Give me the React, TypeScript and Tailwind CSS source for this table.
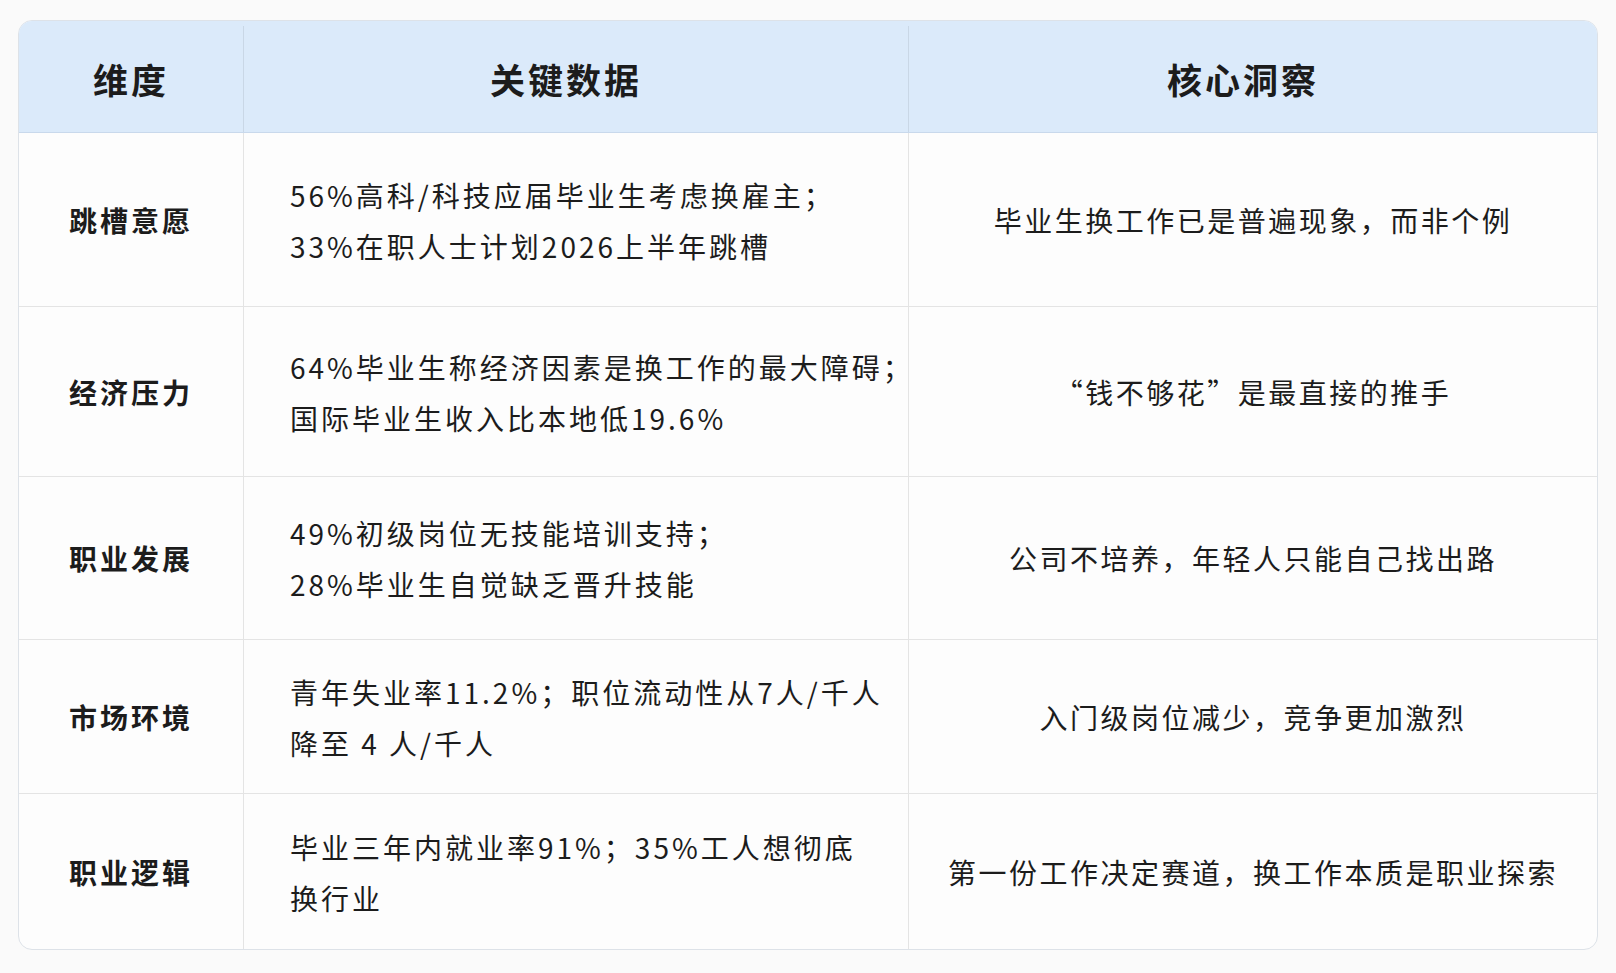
type Row = {
  dim: string;
  data: string[];
  insight: string;
  h: string;
};

const rows: Row[] = [
  {
    dim: "跳槽意愿",
    data: ["56%高科/科技应届毕业生考虑换雇主；", "33%在职人士计划2026上半年跳槽"],
    insight: "毕业生换工作已是普遍现象，而非个例",
    h: "h-[174px]",
  },
  {
    dim: "经济压力",
    data: ["64%毕业生称经济因素是换工作的最大障碍；", "国际毕业生收入比本地低19.6%"],
    insight: "“钱不够花”是最直接的推手",
    h: "h-[170px]",
  },
  {
    dim: "职业发展",
    data: ["49%初级岗位无技能培训支持；", "28%毕业生自觉缺乏晋升技能"],
    insight: "公司不培养，年轻人只能自己找出路",
    h: "h-[163px]",
  },
  {
    dim: "市场环境",
    data: ["青年失业率11.2%；职位流动性从7人/千人", "降至 4 人/千人"],
    insight: "入门级岗位减少，竞争更加激烈",
    h: "h-[154px]",
  },
  {
    dim: "职业逻辑",
    data: ["毕业三年内就业率91%；35%工人想彻底", "换行业"],
    insight: "第一份工作决定赛道，换工作本质是职业探索",
    h: "h-[155px]",
  },
];

function App() {
  return (
    <div
      className="min-h-[973px] w-full bg-[#fafafa] pt-[20px] pl-[18px] text-[#1c1c1c]"
      style={{ fontFamily: '"Noto Sans CJK SC", "Noto Sans", sans-serif' }}
    >
      <div className="w-[1580px] overflow-hidden rounded-[14px] border border-[#dde2e8] bg-[#fdfdfd]">
        {/* header */}
        <div className="grid h-[112px] grid-cols-[225px_665px_1fr] border-b border-[#c9d9ec] bg-[#dbeafa] pt-[5px]">
          <div className="flex items-center justify-center border-r border-[#c9d7e6] text-[35px] font-bold tracking-[3px]">
            维度
          </div>
          <div className="flex items-center justify-center border-r border-[#c9d7e6] pr-[20px] text-[35px] font-bold tracking-[3px]">
            关键数据
          </div>
          <div className="flex items-center justify-center pr-[20px] text-[35px] font-bold tracking-[3px]">
            核心洞察
          </div>
        </div>

        {rows.map((row, i) => (
          <div
            key={row.dim}
            className={`grid grid-cols-[225px_665px_1fr] ${row.h} ${i < rows.length - 1 ? "border-b border-[#e4e4e4]" : ""}`}
          >
            <div className="flex items-center justify-center border-r border-[#e4e4e4] text-[28px] font-bold tracking-[3px]">
              {row.dim}
            </div>
            <div className="flex flex-col justify-center whitespace-nowrap border-r border-[#e4e4e4] pl-[46px] pt-[2px] text-[28px] leading-[51px] tracking-[3px]">
              {row.data.map((line) => (
                <div key={line}>{line}</div>
              ))}
            </div>
            <div className="flex items-center justify-center whitespace-nowrap text-[28px] tracking-[2.5px]">
              {row.insight}
            </div>
          </div>
        ))}
      </div>
    </div>
  );
}

export default App;
